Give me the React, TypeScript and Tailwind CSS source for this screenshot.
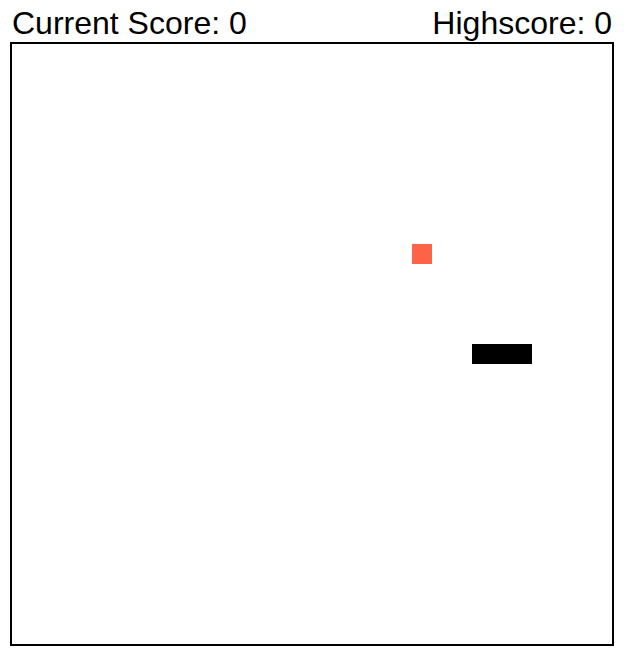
import { useState } from 'react';

const CELL = 20;

export default function App() {
  const [score] = useState(0);
  const [highscore] = useState(0);
  const [food] = useState({ x: 20, y: 10 });
  const [snake] = useState([
    { x: 23, y: 15 },
    { x: 24, y: 15 },
    { x: 25, y: 15 },
  ]);

  return (
    <div className="min-h-screen bg-white px-[10px] pt-[5px] font-['Liberation_Sans',Arial,sans-serif] text-black">
      <div className="w-[604px]">
        <div className="flex justify-between text-[32px] leading-[37px] px-[2px]">
          <span>Current Score: {score}</span>
          <span>Highscore: {highscore}</span>
        </div>
        <div className="border-2 border-black w-[604px] h-[604px]">
          <div className="relative w-[600px] h-[600px]">
            <div
              className="absolute w-[20px] h-[20px] bg-[#ff6347]"
              style={{ left: food.x * CELL, top: food.y * CELL }}
            />
            {snake.map((s, i) => (
              <div
                key={i}
                className="absolute w-[20px] h-[20px] bg-black"
                style={{ left: s.x * CELL, top: s.y * CELL }}
              />
            ))}
          </div>
        </div>
      </div>
    </div>
  );
}
